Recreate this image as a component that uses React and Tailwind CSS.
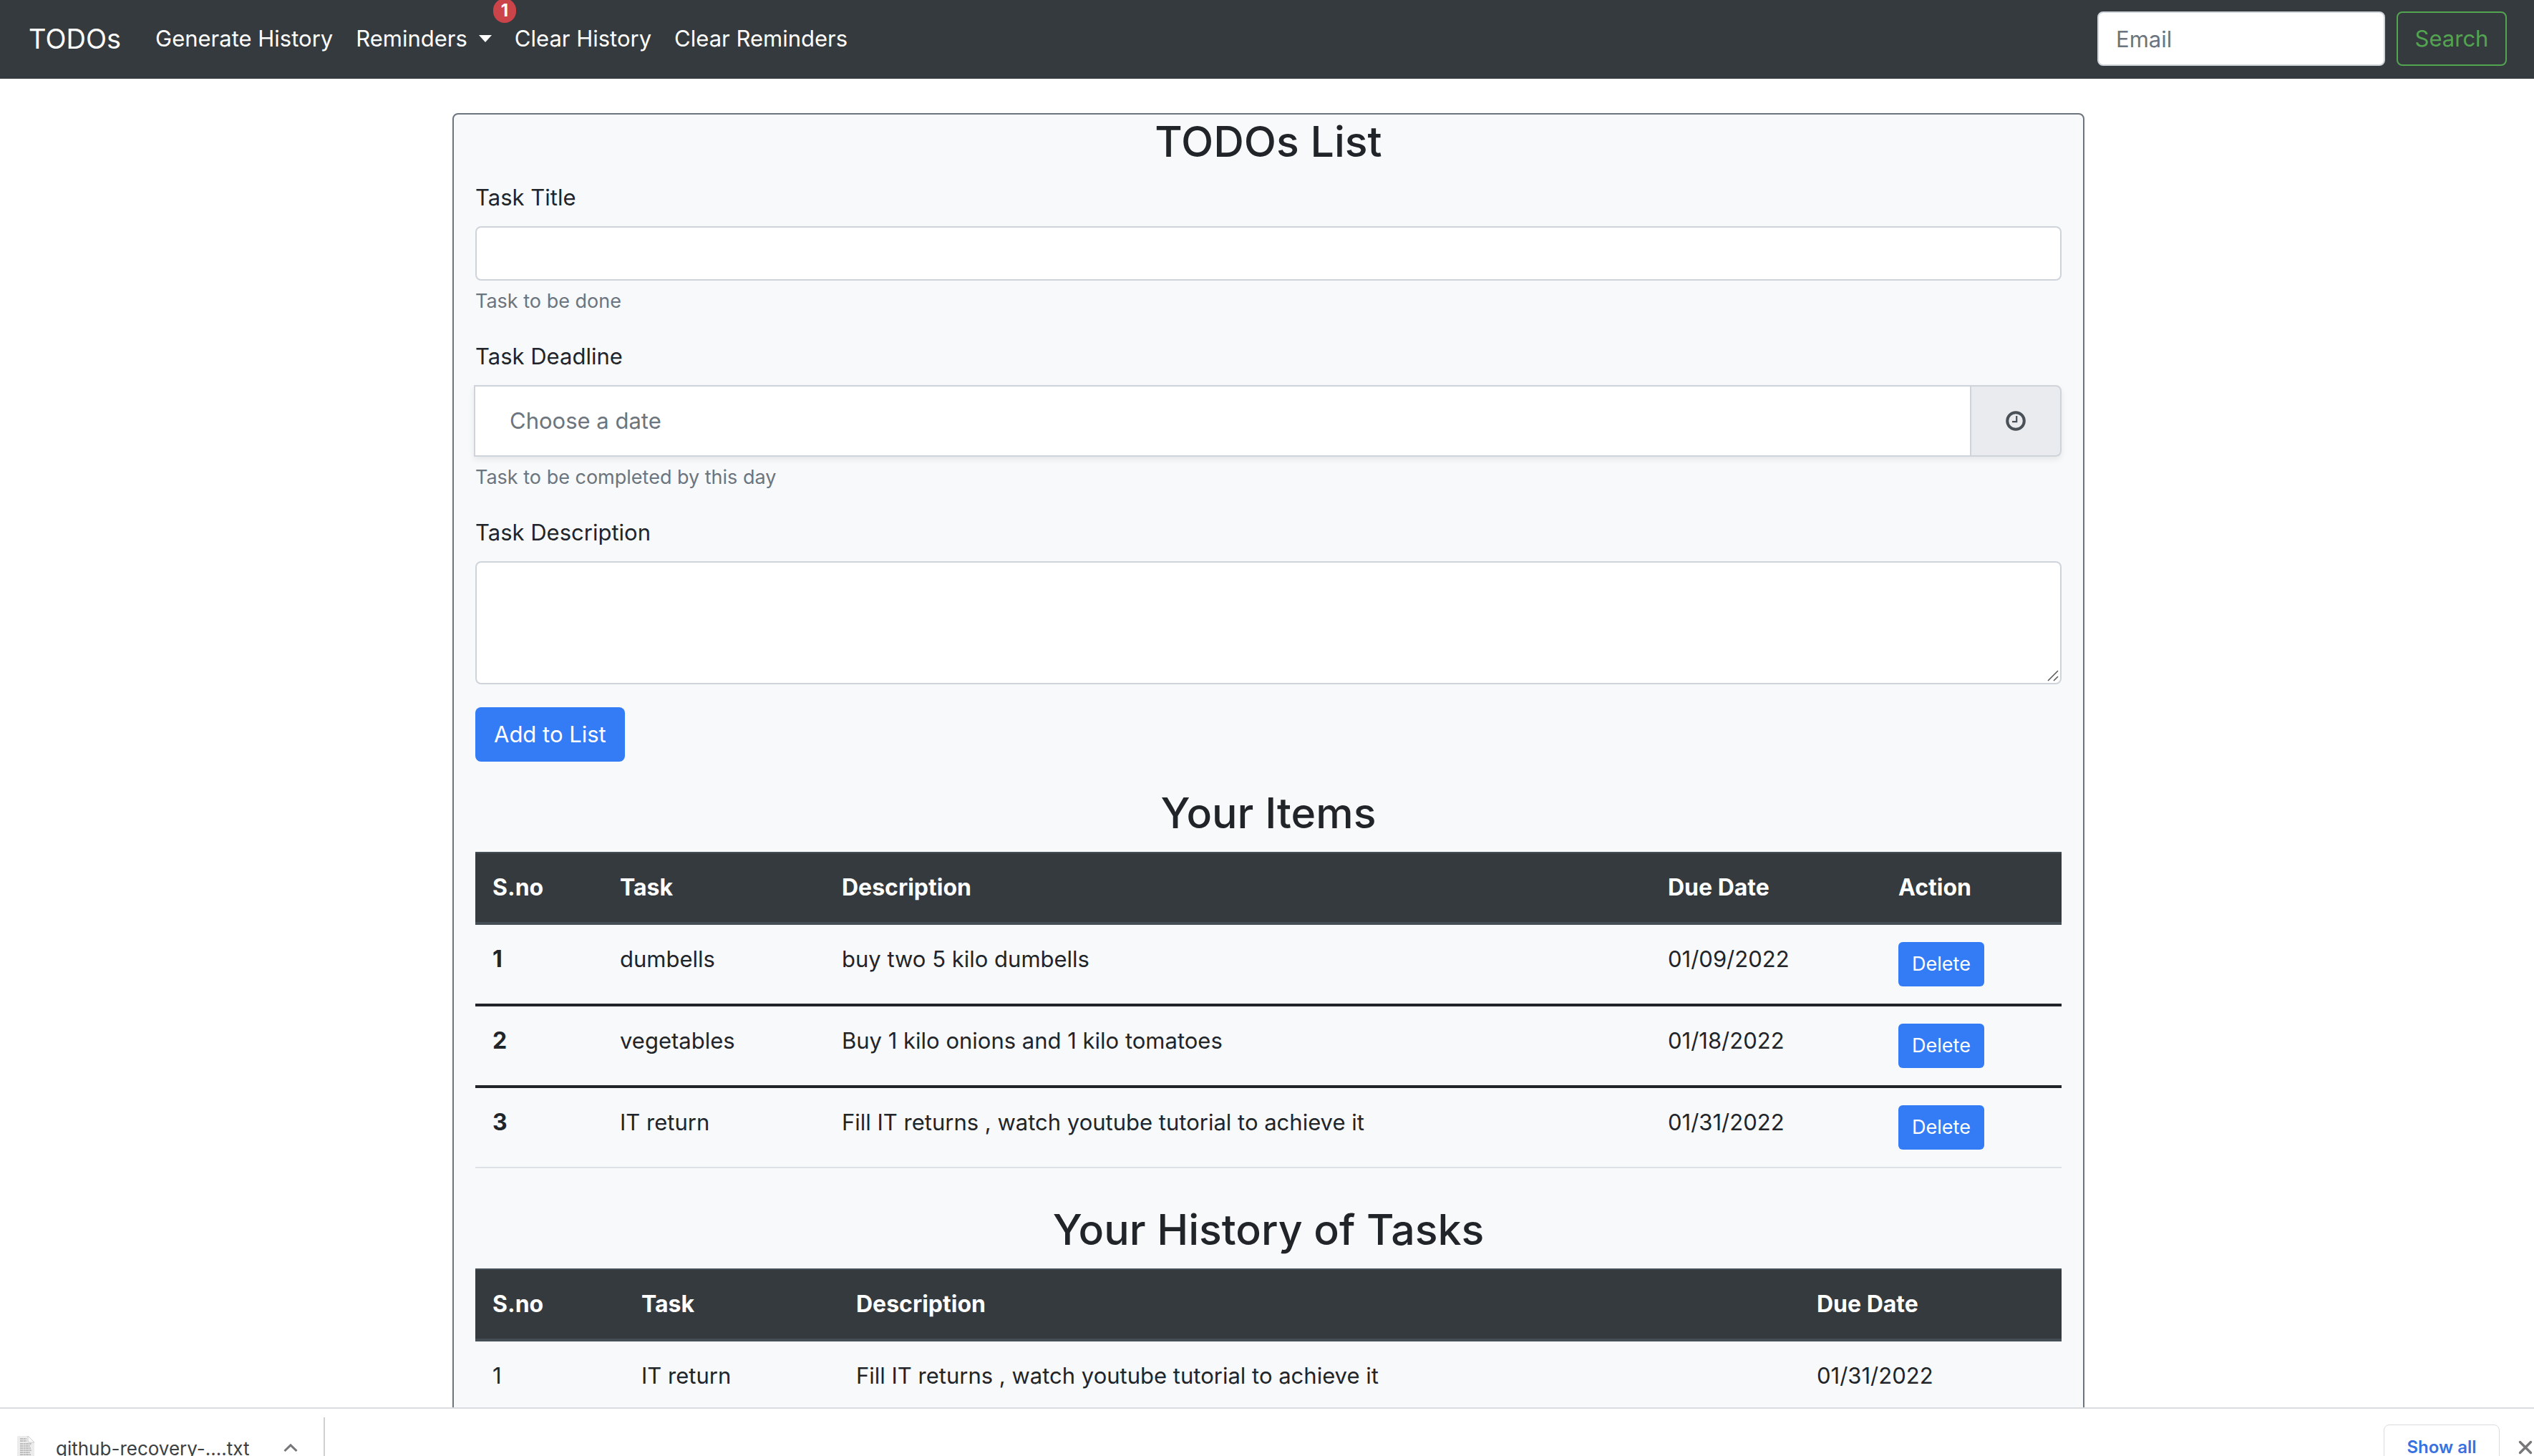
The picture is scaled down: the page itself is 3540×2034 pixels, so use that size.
const items = [
  { no: 1, task: "dumbells", description: "buy two 5 kilo dumbells", due: "01/09/2022" },
  { no: 2, task: "vegetables", description: "Buy 1 kilo onions and 1 kilo tomatoes", due: "01/18/2022" },
  { no: 3, task: "IT return", description: "Fill IT returns , watch youtube tutorial to achieve it", due: "01/31/2022" },
];

const history = [
  { no: 1, task: "IT return", description: "Fill IT returns , watch youtube tutorial to achieve it", due: "01/31/2022" },
];

function Navbar() {
  return (
    <nav className="flex items-center bg-[#353a3e] pt-4 pb-[18px] pl-10 pr-[38px] text-[31px] leading-[48px] text-white">
      <a href="#home" className="mr-8 text-[38px] leading-[60px]">TODOs</a>
      <a href="#generate" className="px-4">Generate History</a>
      <a href="#reminders" className="relative flex items-center px-4">
        Reminders
        <svg className="ml-4 h-[10px] w-[18px]" viewBox="0 0 18 10" aria-hidden="true">
          <path d="M0 0H18L9 10Z" fill="currentColor" />
        </svg>
        <span className="absolute -top-[32px] -right-[18px] flex h-[34px] w-8 items-center justify-center rounded-full bg-[#cb444a] text-2xl font-bold">1</span>
      </a>
      <a href="#clear-history" className="px-4">Clear History</a>
      <a href="#clear-reminders" className="px-4">Clear Reminders</a>
      <form className="ml-auto flex gap-4">
        <input type="email" aria-label="Email" placeholder="Email" className="h-[76px] w-[402px] rounded-lg border-2 border-[#ced4da] bg-white px-6 text-[#495057] placeholder:text-[#6c757d]" />
        <button type="button" className="h-[76px] w-[154px] rounded-lg border-2 border-[#53a451] text-center text-[#53a451]">Search</button>
      </form>
    </nav>
  );
}

function Heading({ children }) {
  return <h2 className="mb-4 text-center text-[59px] leading-[76px] font-medium">{children}</h2>;
}

function Hint({ id, children }) {
  return <p id={id} className="mt-2 text-[27px] leading-[42px] text-[#6c757d]">{children}</p>;
}

function TaskForm() {
  return (
    <form>
      <div className="mb-8">
        <label htmlFor="title" className="mb-4 block">Task Title</label>
        <input id="title" type="text" aria-describedby="title-hint" className="block h-[76px] w-full rounded-lg border-2 border-[#ced4da] bg-white px-6" />
        <Hint id="title-hint">Task to be done</Hint>
      </div>
      <div className="mb-8">
        <label htmlFor="deadline" className="mb-4 block">Task Deadline</label>
        <div className="-ml-[2px] flex h-[100px] rounded-r-lg shadow-[0_4px_8px_rgba(0,0,0,0.075)]">
          <input id="deadline" type="text" placeholder="Choose a date" aria-describedby="deadline-hint" className="min-w-0 flex-1 border-2 border-r-0 border-[#ced4da] bg-white px-12 placeholder:text-[#6c757d]" />
          <button type="button" aria-label="Pick a time" className="flex w-32 items-center justify-center rounded-r-lg border-2 border-[#ced4da] bg-[#eaebef]">
            <svg className="h-7 w-7" viewBox="0 0 28 28" fill="none" stroke="#495057" aria-hidden="true">
              <circle cx="14" cy="14" r="11.8" strokeWidth="4" />
              <path d="M15.2 7V15.2H9" strokeWidth="2.2" />
            </svg>
          </button>
        </div>
        <Hint id="deadline-hint">Task to be completed by this day</Hint>
      </div>
      <div className="mb-8">
        <label htmlFor="description" className="mb-4 block">Task Description</label>
        <div className="relative">
          <textarea id="description" className="block h-[172px] w-full resize-none rounded-lg border-2 border-[#ced4da] bg-white px-6 py-3" />
          <svg className="pointer-events-none absolute right-1 bottom-1 h-4 w-4" viewBox="0 0 16 16" fill="none" stroke="#555" strokeWidth="1.5" aria-hidden="true">
            <path d="M1 15L15 1M9 15L15 9" />
          </svg>
        </div>
      </div>
      <button type="button" className="block h-[76px] rounded-lg bg-[#347cf6] px-[26px] text-white">Add to List</button>
    </form>
  );
}

function HeaderCell({ className = "", children }) {
  return (
    <th scope="col" className={"border-t-2 border-b-4 border-[#454d55] p-6 text-left text-[32px] leading-[48px] font-bold " + className}>
      {children}
    </th>
  );
}

function ItemsTable() {
  return (
    <table className="w-full table-fixed border-separate border-spacing-0">
      <thead className="bg-[#353a3e] text-white">
        <tr>
          <HeaderCell className="w-[178px]">S.no</HeaderCell>
          <HeaderCell className="w-[310px]">Task</HeaderCell>
          <HeaderCell>Description</HeaderCell>
          <HeaderCell className="w-[322px]">Due Date</HeaderCell>
          <HeaderCell className="w-[252px]">Action</HeaderCell>
        </tr>
      </thead>
      <tbody className="[&>tr>*]:border-b-4 [&>tr>*]:border-[#212529] [&>tr>*]:p-6 [&>tr>*]:align-top [&>tr:last-child>*]:border-b-2 [&>tr:last-child>*]:border-[#dee2e6]">
        {items.map((item) => (
          <tr key={item.no}>
            <th scope="row" className="text-left text-[32px] leading-[48px] font-bold">{item.no}</th>
            <td>{item.task}</td>
            <td>{item.description}</td>
            <td>{item.due}</td>
            <td>
              <button type="button" aria-label={"Delete " + item.task} className="block h-[62px] w-[120px] rounded-md bg-[#347cf6] text-center text-[27px] leading-[42px] text-white">Delete</button>
            </td>
          </tr>
        ))}
      </tbody>
    </table>
  );
}

function HistoryTable() {
  return (
    <table className="w-full table-fixed border-separate border-spacing-0">
      <thead className="bg-[#353a3e] text-white">
        <tr>
          <HeaderCell className="w-[208px]">S.no</HeaderCell>
          <HeaderCell className="w-[300px]">Task</HeaderCell>
          <HeaderCell>Description</HeaderCell>
          <HeaderCell className="w-[366px]">Due Date</HeaderCell>
        </tr>
      </thead>
      <tbody className="[&>tr>td]:border-b-2 [&>tr>td]:border-[#dee2e6] [&>tr>td]:p-6">
        {history.map((item) => (
          <tr key={item.no}>
            <td>{item.no}</td>
            <td>{item.task}</td>
            <td>{item.description}</td>
            <td>{item.due}</td>
          </tr>
        ))}
      </tbody>
    </table>
  );
}

function DownloadBar() {
  return (
    <footer className="h-[68px] shrink-0 overflow-hidden border-t-2 border-[#dadce0] bg-white text-[26px] leading-8 text-[#3c4043]">
      <div className="flex h-[108px] items-center pl-6">
        <svg className="h-8 w-6" viewBox="0 0 24 32" aria-hidden="true">
          <path d="M2 0H15L24 9V30Q24 32 22 32H2Q0 32 0 30V2Q0 0 2 0Z" fill="#ececec" />
          <path d="M15 0V7Q15 9 17 9H24Z" fill="#fafafa" stroke="#c4c4c4" strokeWidth="0.8" />
          <path d="M4 4H13M4 7H13M4 11H20M4 14H18M4 17H19M4 20H20M4 23H18M4 26H19" stroke="#adadad" strokeWidth="1.5" strokeDasharray="4 0.6 3 0.5" />
        </svg>
        <span className="ml-[30px] w-[318px] pt-1">github-recovery-....txt</span>
        <button type="button" aria-label="Download options">
          <svg className="h-[11px] w-[20px]" viewBox="0 0 20 11" fill="none" stroke="#757779" strokeWidth="3" aria-hidden="true">
            <path d="M1.5 10L10 1.8L18.5 10" />
          </svg>
        </button>
        <span className="ml-9 h-[84px] w-[2px] bg-[#d0d0d0]" />
        <button type="button" className="ml-auto h-16 w-[162px] rounded-lg border border-[#dadce0] text-2xl font-semibold text-[#3871e0]">Show all</button>
        <button type="button" aria-label="Close" className="ml-[26px] mr-[2px]">
          <svg className="h-5 w-5" viewBox="0 0 20 20" fill="none" stroke="#757779" strokeWidth="3.4" strokeLinecap="round" aria-hidden="true">
            <path d="M2.5 2.5L17.5 17.5M17.5 2.5L2.5 17.5" />
          </svg>
        </button>
      </div>
    </footer>
  );
}

export default function App() {
  return (
    <div className="flex h-screen flex-col bg-white font-['Inter',sans-serif] text-[31px] leading-[48px] text-[#212529]">
      <div className="min-h-0 flex-1 overflow-hidden">
        <Navbar />
        <div className="pt-12 pl-1">
          <main className="mx-auto w-full max-w-[2280px] rounded-lg border-2 border-[#6c757d] bg-[#f8f9fb] px-[30px] pb-12">
            <Heading>TODOs List</Heading>
            <TaskForm />
            <section className="mt-[34px]">
              <Heading>Your Items</Heading>
              <ItemsTable />
            </section>
            <section className="mt-12">
              <Heading>Your History of Tasks</Heading>
              <HistoryTable />
            </section>
          </main>
        </div>
      </div>
      <DownloadBar />
    </div>
  );
}
